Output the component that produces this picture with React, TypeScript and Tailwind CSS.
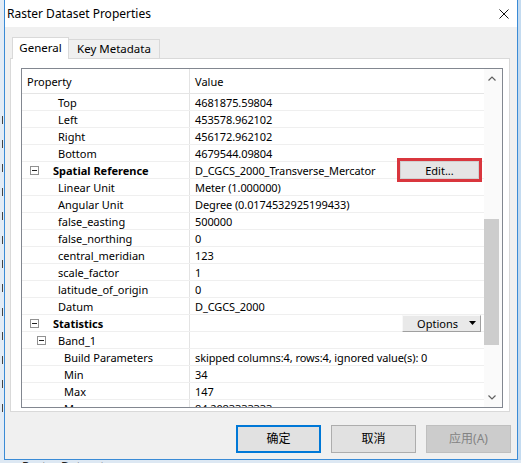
import React from 'react';

type Row = {
  label: string;
  value?: string;
  pad?: string;
  bold?: boolean;
  exp?: 'l1' | 'l2';
  extra?: 'edit' | 'options';
};

const rows: Row[] = [
  { label: 'Top', value: '4681875.59804', pad: 'pl-[36px]' },
  { label: 'Left', value: '453578.962102', pad: 'pl-[36px]' },
  { label: 'Right', value: '456172.962102', pad: 'pl-[36px]' },
  { label: 'Bottom', value: '4679544.09804', pad: 'pl-[36px]' },
  { label: 'Spatial Reference', value: 'D_CGCS_2000_Transverse_Mercator', exp: 'l1', bold: true, extra: 'edit' },
  { label: 'Linear Unit', value: 'Meter (1.000000)', pad: 'pl-[36px]' },
  { label: 'Angular Unit', value: 'Degree (0.0174532925199433)', pad: 'pl-[36px]' },
  { label: 'false_easting', value: '500000', pad: 'pl-[36px]' },
  { label: 'false_northing', value: '0', pad: 'pl-[36px]' },
  { label: 'central_meridian', value: '123', pad: 'pl-[36px]' },
  { label: 'scale_factor', value: '1', pad: 'pl-[36px]' },
  { label: 'latitude_of_origin', value: '0', pad: 'pl-[36px]' },
  { label: 'Datum', value: 'D_CGCS_2000', pad: 'pl-[36px]' },
  { label: 'Statistics', exp: 'l1', bold: true, extra: 'options' },
  { label: 'Band_1', exp: 'l2' },
  { label: 'Build Parameters', value: 'skipped columns:4, rows:4, ignored value(s): 0', pad: 'pl-[42px]' },
  { label: 'Min', value: '34', pad: 'pl-[42px]' },
  { label: 'Max', value: '147', pad: 'pl-[42px]' },
  { label: 'Mean', value: '84.2083333333', pad: 'pl-[42px]' },
];

function Minus() {
  return (
    <div className="w-[9px] h-[9px] border border-[#919191] bg-white flex items-center justify-center shrink-0">
      <div className="w-[5px] h-[1px] bg-[#222]" />
    </div>
  );
}

function LabelCell({ r }: { r: Row }) {
  if (r.exp === 'l1') {
    return (
      <div className="w-[168px] shrink-0 h-full border-r border-[#e3e3e3] flex items-center">
        <div className="ml-[8px]"><Minus /></div>
        <span className={'ml-[14px] whitespace-nowrap ' + (r.bold ? 'font-bold' : '')}>{r.label}</span>
      </div>
    );
  }
  if (r.exp === 'l2') {
    return (
      <div className="w-[168px] shrink-0 h-full border-r border-[#e3e3e3] flex items-center">
        <div className="ml-[15px]"><Minus /></div>
        <span className="ml-[12px] whitespace-nowrap">{r.label}</span>
      </div>
    );
  }
  return (
    <div className={'w-[168px] shrink-0 h-full border-r border-[#e3e3e3] flex items-center whitespace-nowrap ' + (r.pad || '')}>
      {r.label}
    </div>
  );
}

function ValueCell({ r }: { r: Row }) {
  return (
    <div className="flex-1 h-full flex items-center pl-[5px] min-w-0">
      <span className="whitespace-nowrap tracking-[-0.1px]">{r.value}</span>
      {r.extra === 'edit' && (
        <div className="ml-auto mr-[2px] w-[85px] h-[24px] border-[3px] border-[#d9363e] relative z-10 flex bg-white">
          <div className="flex-1 bg-[#e5e5e5] border border-[#d0d0d0] flex items-center justify-center text-[11px]">Edit...</div>
        </div>
      )}
      {r.extra === 'options' && (
        <div className="ml-auto mr-[3px] w-[79px] h-[17px] bg-[#e9e9e9] border-t border-l border-t-[#f8f8f8] border-l-[#f8f8f8] border-r border-b border-r-[#a0a0a0] border-b-[#a0a0a0] flex items-center justify-end pr-[4px]">
          <span>Options</span>
          <svg width="7" height="4" viewBox="0 0 7 4" className="ml-[11px]">
            <path d="M0 0 H7 L3.5 4 Z" fill="#000" />
          </svg>
        </div>
      )}
    </div>
  );
}

function Btn({ label, kind }: { label: string; kind: 'default' | 'normal' | 'disabled' }) {
  const cls =
    kind === 'default'
      ? 'border-2 border-[#0078d7] bg-[#e1e1e1] text-black'
      : kind === 'normal'
      ? 'border border-[#adadad] bg-[#e1e1e1] text-black'
      : 'border border-[#bfbfbf] bg-[#cccccc] text-[#838383]';
  return (
    <div className={'w-[85px] h-[28px] flex items-center justify-center text-[12px] ' + cls}>
      {label}
    </div>
  );
}

export default function App() {
  return (
    <div className="w-[521px] h-[463px] overflow-hidden flex flex-col bg-[#c9ddf0] font-['Noto_Sans','Noto_Sans_CJK_SC',sans-serif] text-[11px] text-black leading-none">
      <div className="flex h-[460px] shrink-0">
        {/* left strip of background app */}
        <div className="w-[4px] shrink-0 bg-[#e3ecf6] flex flex-col items-end pt-[116px]">
          {Array.from({ length: 13 }).map((_, i) => (
            <div key={i} className="h-[24px] w-[4px] flex justify-end items-start">
              <div className="w-[1px] h-[8px] bg-[#444] mr-[1px]" />
            </div>
          ))}
        </div>
        {/* window */}
        <div className="w-[514px] shrink-0 border-x border-b border-[#3a8bd6] bg-[#f0f0f0] flex flex-col">
          <div className="h-[27px] bg-white flex items-center pl-[2px] pr-[8px] shrink-0">
            <span className="text-[12px]">Raster Dataset Properties</span>
            <svg width="10" height="10" viewBox="0 0 10 10" className="ml-auto">
              <path d="M0.5 0.5 L9.5 9.5 M9.5 0.5 L0.5 9.5" stroke="#111" strokeWidth="1" />
            </svg>
          </div>
          <div className="pl-[5px] pt-[10px] flex flex-col">
            {/* tabs */}
            <div className="h-[22px] flex items-end pl-[2px] relative z-10 -mb-[1px]">
              <div className="w-[57px] h-[22px] bg-white border-l border-t border-r border-[#d9d9d9] flex items-center justify-center text-[11.5px] pb-[1px]">
                General
              </div>
              <div className="w-[91px] h-[20px] bg-[#f0f0f0] border-t border-r border-b border-[#d9d9d9] flex items-center justify-center text-[11.5px]">
                Key Metadata
              </div>
            </div>
            {/* panel */}
            <div className="w-[500px] h-[354px] border border-[#d9d9d9] bg-white pt-[9px] pl-[10px]">
              <div className="w-[482px] h-[340px] border border-[#828790] bg-white flex">
                <div className="flex-1 flex flex-col overflow-hidden min-w-0">
                  <div className="h-[25px] shrink-0 flex border-b border-[#e5e5e5]">
                    <div className="w-[168px] shrink-0 h-full border-r border-[#e3e3e3] flex items-center pl-[5px]">Property</div>
                    <div className="flex-1 flex items-center pl-[5px]">Value</div>
                  </div>
                  {rows.map((r, i) => (
                    <div key={i} className="h-[17px] shrink-0 flex border-b border-[#efefef]">
                      <LabelCell r={r} />
                      <ValueCell r={r} />
                    </div>
                  ))}
                </div>
                {/* scrollbar */}
                <div className="w-[18px] shrink-0 bg-[#fafafa] flex flex-col">
                  <div className="h-[17px] flex items-center justify-center pr-[3px] pt-[2px]">
                    <svg width="8" height="5" viewBox="0 0 8 5">
                      <path d="M0.5 4.5 L4 1 L7.5 4.5" stroke="#606060" strokeWidth="1.2" fill="none" />
                    </svg>
                  </div>
                  <div className="flex-1 flex flex-col">
                    <div className="h-[133px]" />
                    <div className="h-[126px] w-[15px] bg-[#cdcdcd]" />
                  </div>
                  <div className="h-[17px] flex items-center justify-center pr-[3px] pb-[2px]">
                    <svg width="8" height="5" viewBox="0 0 8 5">
                      <path d="M0.5 0.5 L4 4 L7.5 0.5" stroke="#606060" strokeWidth="1.2" fill="none" />
                    </svg>
                  </div>
                </div>
              </div>
            </div>
          </div>
          {/* buttons */}
          <div className="flex justify-end gap-[10px] pr-[6px] mt-[13px]">
            <Btn label="确定" kind="default" />
            <Btn label="取消" kind="normal" />
            <Btn label="应用(A)" kind="disabled" />
          </div>
        </div>
        <div className="flex-1 bg-[#c4dbf0]" />
      </div>
      <div className="h-[3px] overflow-hidden pl-[22px] text-[12px] leading-[12px] text-[#222] bg-[#dde8f3] whitespace-nowrap">
        <div className="pt-[1px]">Raster Dataset</div>
      </div>
    </div>
  );
}
